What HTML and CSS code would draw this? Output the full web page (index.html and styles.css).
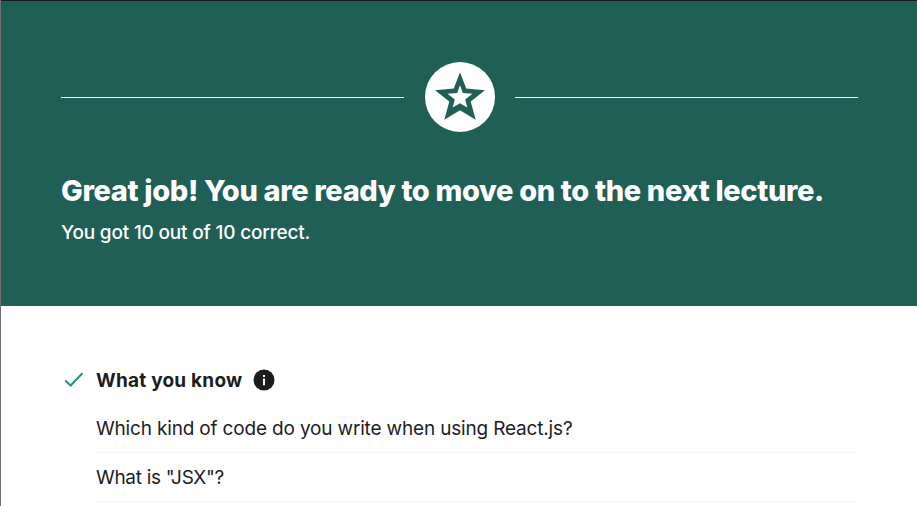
FILE: index.html
```html
<!DOCTYPE html>
<html lang="en">
<head>
<meta charset="utf-8">
<title>Quiz results</title>
<link rel="stylesheet" href="styles.css">
</head>
<body>
<main class="results">
  <header class="banner">
    <div class="badge-row">
      <span class="rule"></span>
      <svg class="badge" viewBox="0 0 70 70" aria-hidden="true">
        <circle cx="35" cy="35" r="35" fill="#fff"/>
        <path class="star" fill-rule="evenodd" d="M35 10.2L41.2 26.6 59.9 28.2 45.7 39.6 50.7 57.7 35 48.3 19.3 57.7 24.3 39.6 10.1 28.2 28.8 26.6ZM35 23.2L32.2 31 22.6 31.7 29.8 37.6 27.7 45.6 35 41.2 42.3 45.6 40.2 37.6 47.4 31.7 37.8 31Z"/>
      </svg>
      <span class="rule"></span>
    </div>
    <h1 class="title">Great job! You are ready to move on to the next lecture.</h1>
    <p class="score">You got 10 out of 10 correct.</p>
  </header>
  <section class="known">
    <div class="known-head">
      <svg class="check" viewBox="0 0 22 22" aria-hidden="true"><path d="M2.2 11.5L7.6 16.5 19.4 4.2"/></svg>
      <h2 class="known-title">What you know</h2>
      <svg class="info" viewBox="0 0 22 22" aria-hidden="true"><circle cx="11" cy="11" r="10.5"/><path d="M10 6h2v2h-2zM10 9.5h2v6.7h-2z"/></svg>
    </div>
    <ul class="questions">
      <li class="question">Which kind of code do you write when using React.js?</li>
      <li class="question second">What is "JSX"?</li>
    </ul>
  </section>
</main>
</body>
</html>
```
FILE: styles.css
```css
* { box-sizing: border-box; margin: 0; padding: 0; }
body { background: #fff; color: #1c1d1f; font-family: Inter, "Liberation Sans", sans-serif; overflow: hidden; }
.results { height: 506px; border-left: 1px solid #6f6f6f; overflow: hidden; }
.banner { height: 306px; padding: 61px 59px 0 60px; background: #205f56; border-top: 1px solid #1c1d1f; color: #fff; }
.badge-row { display: flex; align-items: center; height: 70px; }
.rule { flex: none; width: 343px; height: 1px; background: #fff; }
.badge { width: 70px; height: 70px; margin: 0 20px 0 21px; }
.star { fill: #205f56; }
.title { margin-top: 40px; font-size: 29px; line-height: 38px; font-weight: 800; letter-spacing: -0.35px; white-space: nowrap; }
.score { margin-top: 9px; font-size: 19px; line-height: 28px; font-weight: 500; letter-spacing: -0.18px; white-space: nowrap; }
.known { padding: 60px 60px 0; }
.known-head { display: flex; align-items: center; height: 28px; }
.check { width: 22px; height: 22px; margin-left: 2px; fill: none; stroke: #2b917c; stroke-width: 2; }
.known-title { width: 146px; margin-left: 11px; padding-top: 2px; font-size: 19px; line-height: 28px; font-weight: 700; letter-spacing: 0.22px; white-space: nowrap; }
.info { width: 22px; height: 22px; margin-left: 11px; fill: #1c1d1f; }
.info path { fill: #fff; }
.questions { margin-left: 35px; list-style: none; }
.question { height: 59px; padding-top: 21px; border-bottom: 1px solid #f7f7f7; font-size: 19px; line-height: 28px; letter-spacing: -0.17px; white-space: nowrap; }
.question.second { height: 49px; padding-top: 11px; letter-spacing: -0.31px; }
```
